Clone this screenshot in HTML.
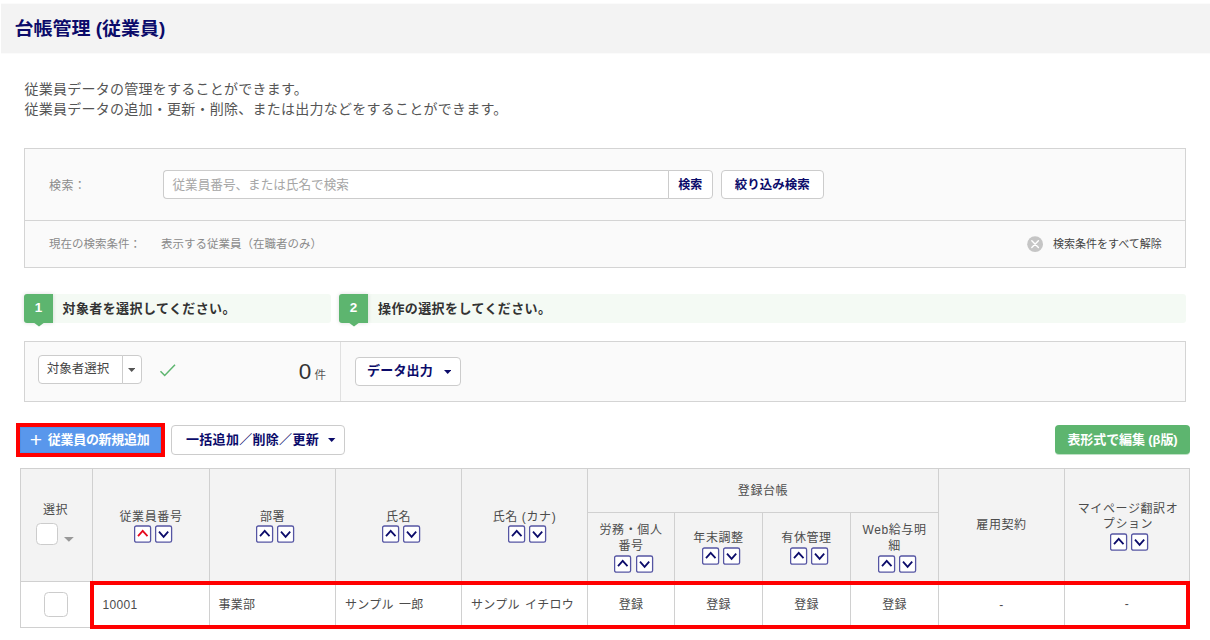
<!DOCTYPE html>
<html lang="ja">
<head>
<meta charset="utf-8">
<title>台帳管理 (従業員)</title>
<style>
*{box-sizing:border-box;margin:0;padding:0}
html,body{width:1210px;height:640px;background:#fff;overflow:hidden}
body{position:relative;font-family:"Liberation Sans","Noto Sans CJK JP",sans-serif;color:#444;font-size:12px}
.abs{position:absolute;white-space:nowrap}
.hdr{left:1px;top:4px;width:1209px;height:49px;background:#f3f3f3;box-shadow:0 1px 0 #fbfbfb,0 -1px 0 #fbfbfb}
.title{left:14.5px;top:14.6px;font-size:19px;line-height:28px;font-weight:bold;color:#0b0b6a;transform:scaleY(.93);transform-origin:0 50%}
.desc{left:24.5px;top:79.2px;font-size:14px;line-height:20.2px;color:#555;letter-spacing:.25px}
.sbox{left:24px;top:148px;width:1162px;height:120px;background:#fafafa;border:1px solid #d4d4d4}
.sdiv{left:25px;top:220px;width:1160px;height:1px;background:#d4d4d4}
.lbl{color:#8a8a8a}
.input{left:163px;top:170px;width:506px;height:29px;background:#fff;border:1px solid #ccc;border-right:none;border-radius:4px 0 0 4px}
.btn{background:#fff;border:1px solid #ccc;border-radius:4px;color:#0b0b6a;font-weight:bold;text-align:center}
.green{background:#5db56f}
.bar{background:#f4faf4;border-radius:3px;height:28.5px;top:294px}
.step{top:294px;width:29px;height:28.5px;background:#5db56f;border-radius:3px 0 0 3px;color:#fff;font-weight:bold;font-size:13.5px;line-height:28.5px;text-align:center;box-shadow:0 0 4px rgba(0,0,0,.14)}
.tri{width:0;height:0;border-left:5.5px solid transparent;border-right:5.5px solid transparent;border-top:4.5px solid #5db56f;top:322px}
.steptxt{top:294.5px;line-height:28px;font-size:13px;font-weight:bold;color:#333;letter-spacing:.4px}
.panel{left:24px;top:341px;width:1162px;height:61px;background:#fafafa;border:1px solid #d4d4d4}
.caret{width:0;height:0;border-left:3.5px solid transparent;border-right:3.5px solid transparent;border-top:4px solid #333}
table{border-collapse:collapse}
</style>
</head>
<body>
<div class="abs hdr"></div>
<div class="abs title">台帳管理 (従業員)</div>
<div class="abs desc">従業員データの管理をすることができます。<br>従業員データの追加・更新・削除、または出力などをすることができます。</div>

<!-- search box -->
<div class="abs sbox"></div>
<div class="abs sdiv"></div>
<div class="abs lbl" style="left:49px;top:177px;font-size:12px;line-height:18px;letter-spacing:.4px">検索：</div>
<div class="abs input"></div>
<div class="abs" style="left:172.5px;top:175.5px;font-size:12.6px;line-height:19px;color:#a6a6a6">従業員番号、または氏名で検索</div>
<div class="abs btn" style="left:668px;top:170px;width:44.5px;height:29px;border-radius:0 4px 4px 0;font-size:12px;line-height:29px">検索</div>
<div class="abs btn" style="left:721px;top:170px;width:102.5px;height:29px;font-size:12.5px;line-height:29px">絞り込み検索</div>
<div class="abs lbl" style="left:49px;top:235px;font-size:11.5px;line-height:18px">現在の検索条件：</div>
<div class="abs lbl" style="left:161px;top:235px;font-size:11.5px;line-height:18px">表示する従業員（在職者のみ）</div>
<svg class="abs" style="left:1027px;top:236px" width="17" height="17" viewBox="0 0 17 17"><circle cx="8.1" cy="8.15" r="7.9" fill="#c5c5c5"/><path d="M4.8 4.85l6.6 6.6M11.4 4.85l-6.6 6.6" stroke="#fff" stroke-width="1.4" stroke-linecap="round"/></svg>
<div class="abs" style="left:1053px;top:235px;font-size:11px;line-height:18px;color:#444">検索条件をすべて解除</div>

<!-- steps -->
<div class="abs bar" style="left:30px;width:301px"></div>
<div class="abs step" style="left:24px">1</div>
<svg class="abs" style="left:32px;top:322px" width="14" height="6" viewBox="0 0 14 6"><path d="M1 0h12L7 4.6z" fill="#5db56f"/></svg>
<div class="abs steptxt" style="left:62.5px">対象者を選択してください。</div>
<div class="abs bar" style="left:345px;width:841px"></div>
<div class="abs step" style="left:339px">2</div>
<svg class="abs" style="left:346.7px;top:322px" width="14" height="6" viewBox="0 0 14 6"><path d="M1 0h12L7 4.6z" fill="#5db56f"/></svg>
<div class="abs steptxt" style="left:378px">操作の選択をしてください。</div>

<!-- panel -->
<div class="abs panel"></div>
<div class="abs" style="left:340px;top:342px;width:1px;height:59px;background:#e0e0e0"></div>
<div class="abs btn" style="left:38px;top:355px;width:85px;height:28.5px;border-radius:4px 0 0 4px;font-weight:normal;color:#444;font-size:12.5px;line-height:26px;text-align:left;padding-left:7.7px">対象者選択</div>
<div class="abs btn" style="left:122px;top:355px;width:20px;height:28.5px;border-radius:0 4px 4px 0"></div>
<svg class="abs" style="left:127.8px;top:367.6px" width="7.4" height="4" viewBox="0 0 7.4 4"><path d="M0 0h7.4L3.7 4z" fill="#555"/></svg>
<svg class="abs" style="left:159px;top:363px" width="18" height="15" viewBox="0 0 18 15"><path d="M1.5 8.2l4.2 4.3L16 1.8" fill="none" stroke="#5db56f" stroke-width="1.5"/></svg>
<div class="abs" style="left:298.8px;top:358px;font-size:22.5px;line-height:28px;color:#333">0</div>
<div class="abs" style="left:314.5px;top:366px;font-size:11.5px;line-height:18px;color:#555">件</div>
<div class="abs btn" style="left:355px;top:357px;width:105.5px;height:28.5px;font-size:13px;line-height:26px;text-align:left;padding-left:11px;letter-spacing:.2px">データ出力</div>
<svg class="abs" style="left:443.6px;top:369.6px" width="7.4" height="4" viewBox="0 0 7.4 4"><path d="M0 0h7.4L3.7 4z" fill="#0b0b6a"/></svg>

<!-- action buttons -->
<div class="abs" style="left:16px;top:423px;width:149px;height:33.5px;background:#f00"></div>
<div class="abs" style="left:20px;top:427px;width:141px;height:26px;background:#5997ec;box-shadow:inset 0 0 0 1px #4f90e8;color:#fff;font-weight:bold;font-size:13px;line-height:26px;padding-left:10px;letter-spacing:-.3px"><span style="font-size:21px;line-height:20px;vertical-align:-3.2px;font-weight:normal;margin-left:-.2px;margin-right:6px">+</span>従業員の新規追加</div>
<div class="abs btn" style="left:171px;top:425px;width:174px;height:29.5px;font-size:13px;line-height:27.5px;text-align:left;padding-left:14px;letter-spacing:.3px">一括追加／削除／更新</div>
<svg class="abs" style="left:328.2px;top:438px" width="7.4" height="4" viewBox="0 0 7.4 4"><path d="M0 0h7.4L3.7 4z" fill="#0b0b6a"/></svg>
<div class="abs green" style="left:1055px;top:425px;width:135px;height:29px;border-radius:4px;box-shadow:0 1px 0 rgba(93,181,111,.4);color:#fff;font-weight:bold;font-size:13px;line-height:30.5px;text-align:center;letter-spacing:-.1px">表形式で編集 (β版)</div>

<!-- table -->
<style>
.tb{left:20px;top:468px;width:1170px;height:160px;border:1px solid #d0d0d0;background:#fff}
.th{left:21px;top:469px;width:1168px;height:112px;background:#f3f3f3}
.vl{width:1px;background:#d0d0d0;top:469px;height:158px}
.hl{height:1px;background:#d0d0d0}
.ht{font-size:12px;line-height:15.6px;color:#4c4c4c;text-align:center;letter-spacing:.6px;white-space:normal}
.td{top:596px;font-size:12px;line-height:18px;color:#4c4c4c;letter-spacing:.3px;word-spacing:1.5px}
.cb{background:#fff;border:1px solid #ccc;border-radius:4.5px}
</style>
<div class="abs tb"></div>
<div class="abs th"></div>
<div class="abs hl" style="left:21px;top:581px;width:1168px"></div>
<div class="abs hl" style="left:587px;top:511.5px;width:352px"></div>
<div class="abs vl" style="left:92px"></div>
<div class="abs vl" style="left:209px"></div>
<div class="abs vl" style="left:335px"></div>
<div class="abs vl" style="left:461px"></div>
<div class="abs vl" style="left:587px"></div>
<div class="abs vl" style="left:674px;top:512px;height:115px"></div>
<div class="abs vl" style="left:762px;top:512px;height:115px"></div>
<div class="abs vl" style="left:850px;top:512px;height:115px"></div>
<div class="abs vl" style="left:938px"></div>
<div class="abs vl" style="left:1064px"></div>
<div class="abs ht" style="left:20px;top:502.7px;width:71px">選択</div>
<div class="abs cb" style="left:36px;top:523px;width:22px;height:22px"></div>
<svg class="abs" style="left:64.3px;top:537px" width="9.8" height="4.8" viewBox="0 0 9.8 4.8"><path d="M0 0h9.8L4.9 4.8z" fill="#999"/></svg>
<div class="abs ht" style="left:93px;top:510.2px;width:116px">従業員番号</div>
<svg class="abs" style="left:134.1px;top:525.3px" width="18" height="18" viewBox="0 0 18 18"><rect x=".6" y="1" width="16" height="16.2" rx="1.8" fill="#fff" stroke="#5555a3" stroke-width="1.3"/><path d="M4 11.1l4.7-5.2 4.8 5.2" fill="none" stroke="#e60a1e" stroke-width="1.8"/></svg>
<svg class="abs" style="left:155.2px;top:525.3px" width="18" height="18" viewBox="0 0 18 18"><rect x=".6" y="1" width="16" height="16.2" rx="1.8" fill="#fff" stroke="#5555a3" stroke-width="1.3"/><path d="M4 6.7l4.6 5.2 4.6-5.2" fill="none" stroke="#0b0b6a" stroke-width="1.8"/></svg>
<div class="abs ht" style="left:210px;top:510.2px;width:125px">部署</div>
<svg class="abs" style="left:255.5px;top:525.3px" width="18" height="18" viewBox="0 0 18 18"><rect x=".6" y="1" width="16" height="16.2" rx="1.8" fill="#fff" stroke="#5555a3" stroke-width="1.3"/><path d="M4 11.1l4.7-5.2 4.8 5.2" fill="none" stroke="#0b0b6a" stroke-width="1.8"/></svg>
<svg class="abs" style="left:276.6px;top:525.3px" width="18" height="18" viewBox="0 0 18 18"><rect x=".6" y="1" width="16" height="16.2" rx="1.8" fill="#fff" stroke="#5555a3" stroke-width="1.3"/><path d="M4 6.7l4.6 5.2 4.6-5.2" fill="none" stroke="#0b0b6a" stroke-width="1.8"/></svg>
<div class="abs ht" style="left:336px;top:510.2px;width:125px">氏名</div>
<svg class="abs" style="left:381.5px;top:525.3px" width="18" height="18" viewBox="0 0 18 18"><rect x=".6" y="1" width="16" height="16.2" rx="1.8" fill="#fff" stroke="#5555a3" stroke-width="1.3"/><path d="M4 11.1l4.7-5.2 4.8 5.2" fill="none" stroke="#0b0b6a" stroke-width="1.8"/></svg>
<svg class="abs" style="left:402.6px;top:525.3px" width="18" height="18" viewBox="0 0 18 18"><rect x=".6" y="1" width="16" height="16.2" rx="1.8" fill="#fff" stroke="#5555a3" stroke-width="1.3"/><path d="M4 6.7l4.6 5.2 4.6-5.2" fill="none" stroke="#0b0b6a" stroke-width="1.8"/></svg>
<div class="abs ht" style="left:462px;top:510.2px;width:125px">氏名 (カナ)</div>
<svg class="abs" style="left:507.5px;top:525.3px" width="18" height="18" viewBox="0 0 18 18"><rect x=".6" y="1" width="16" height="16.2" rx="1.8" fill="#fff" stroke="#5555a3" stroke-width="1.3"/><path d="M4 11.1l4.7-5.2 4.8 5.2" fill="none" stroke="#0b0b6a" stroke-width="1.8"/></svg>
<svg class="abs" style="left:528.6px;top:525.3px" width="18" height="18" viewBox="0 0 18 18"><rect x=".6" y="1" width="16" height="16.2" rx="1.8" fill="#fff" stroke="#5555a3" stroke-width="1.3"/><path d="M4 6.7l4.6 5.2 4.6-5.2" fill="none" stroke="#0b0b6a" stroke-width="1.8"/></svg>
<div class="abs ht" style="left:588px;top:484px;width:350px">登録台帳</div>
<div class="abs ht" style="left:588px;top:523.2px;width:86px">労務・個人<br>番号</div>
<svg class="abs" style="left:614.4px;top:555.3px" width="18" height="18" viewBox="0 0 18 18"><rect x=".6" y="1" width="16" height="16.2" rx="1.8" fill="#fff" stroke="#5555a3" stroke-width="1.3"/><path d="M4 11.1l4.7-5.2 4.8 5.2" fill="none" stroke="#0b0b6a" stroke-width="1.8"/></svg>
<svg class="abs" style="left:635.5px;top:555.3px" width="18" height="18" viewBox="0 0 18 18"><rect x=".6" y="1" width="16" height="16.2" rx="1.8" fill="#fff" stroke="#5555a3" stroke-width="1.3"/><path d="M4 6.7l4.6 5.2 4.6-5.2" fill="none" stroke="#0b0b6a" stroke-width="1.8"/></svg>
<div class="abs ht" style="left:675px;top:531.2px;width:87px">年末調整</div>
<svg class="abs" style="left:702.1px;top:547.3px" width="18" height="18" viewBox="0 0 18 18"><rect x=".6" y="1" width="16" height="16.2" rx="1.8" fill="#fff" stroke="#5555a3" stroke-width="1.3"/><path d="M4 11.1l4.7-5.2 4.8 5.2" fill="none" stroke="#0b0b6a" stroke-width="1.8"/></svg>
<svg class="abs" style="left:723.2px;top:547.3px" width="18" height="18" viewBox="0 0 18 18"><rect x=".6" y="1" width="16" height="16.2" rx="1.8" fill="#fff" stroke="#5555a3" stroke-width="1.3"/><path d="M4 6.7l4.6 5.2 4.6-5.2" fill="none" stroke="#0b0b6a" stroke-width="1.8"/></svg>
<div class="abs ht" style="left:763px;top:531.2px;width:87px">有休管理</div>
<svg class="abs" style="left:790.1px;top:547.3px" width="18" height="18" viewBox="0 0 18 18"><rect x=".6" y="1" width="16" height="16.2" rx="1.8" fill="#fff" stroke="#5555a3" stroke-width="1.3"/><path d="M4 11.1l4.7-5.2 4.8 5.2" fill="none" stroke="#0b0b6a" stroke-width="1.8"/></svg>
<svg class="abs" style="left:811.2px;top:547.3px" width="18" height="18" viewBox="0 0 18 18"><rect x=".6" y="1" width="16" height="16.2" rx="1.8" fill="#fff" stroke="#5555a3" stroke-width="1.3"/><path d="M4 6.7l4.6 5.2 4.6-5.2" fill="none" stroke="#0b0b6a" stroke-width="1.8"/></svg>
<div class="abs ht" style="left:851px;top:523.2px;width:87px">Web給与明<br>細</div>
<svg class="abs" style="left:877.6px;top:555.3px" width="18" height="18" viewBox="0 0 18 18"><rect x=".6" y="1" width="16" height="16.2" rx="1.8" fill="#fff" stroke="#5555a3" stroke-width="1.3"/><path d="M4 11.1l4.7-5.2 4.8 5.2" fill="none" stroke="#0b0b6a" stroke-width="1.8"/></svg>
<svg class="abs" style="left:898.7px;top:555.3px" width="18" height="18" viewBox="0 0 18 18"><rect x=".6" y="1" width="16" height="16.2" rx="1.8" fill="#fff" stroke="#5555a3" stroke-width="1.3"/><path d="M4 6.7l4.6 5.2 4.6-5.2" fill="none" stroke="#0b0b6a" stroke-width="1.8"/></svg>
<div class="abs ht" style="left:939px;top:517.7px;width:125px">雇用契約</div>
<div class="abs ht" style="left:1070px;top:501.7px;width:116px">マイページ翻訳オ<br>プション</div>
<svg class="abs" style="left:1110.3px;top:532.8px" width="18" height="18" viewBox="0 0 18 18"><rect x=".6" y="1" width="16" height="16.2" rx="1.8" fill="#fff" stroke="#5555a3" stroke-width="1.3"/><path d="M4 11.1l4.7-5.2 4.8 5.2" fill="none" stroke="#0b0b6a" stroke-width="1.8"/></svg>
<svg class="abs" style="left:1131.4px;top:532.8px" width="18" height="18" viewBox="0 0 18 18"><rect x=".6" y="1" width="16" height="16.2" rx="1.8" fill="#fff" stroke="#5555a3" stroke-width="1.3"/><path d="M4 6.7l4.6 5.2 4.6-5.2" fill="none" stroke="#0b0b6a" stroke-width="1.8"/></svg>
<div class="abs cb" style="left:43.5px;top:592px;width:24.5px;height:24.5px"></div>
<div class="abs td" style="left:102.5px;top:595.6px">10001</div>
<div class="abs td" style="left:218.5px">事業部</div>
<div class="abs td" style="left:345px">サンプル 一郎</div>
<div class="abs td" style="left:471px">サンプル イチロウ</div>
<div class="abs td" style="left:588px;width:86px;text-align:center">登録</div>
<div class="abs td" style="left:675px;width:87px;text-align:center">登録</div>
<div class="abs td" style="left:763px;width:87px;text-align:center">登録</div>
<div class="abs td" style="left:851px;width:87px;text-align:center">登録</div>
<div class="abs td" style="left:939px;width:125px;text-align:center">-</div>
<div class="abs td" style="left:1065px;width:124px;text-align:center;top:595px">-</div>
<div class="abs" style="left:90px;top:581px;width:1100px;height:48px;border:4px solid #f00"></div>
</body>
</html>
